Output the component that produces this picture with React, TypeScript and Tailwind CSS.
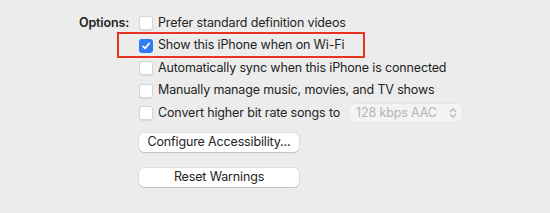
const font = { fontFamily: '"Inter", "Liberation Sans", sans-serif' };

function Checkbox({ checked = false }: { checked?: boolean }) {
  if (checked) {
    return (
      <span className="flex h-[14px] w-[14px] shrink-0 items-center justify-center rounded-[3px] bg-[#2f7cf6]">
        <svg width="10" height="10" viewBox="0 0 10 10" fill="none">
          <path d="M2 5.3 L4.1 7.4 L8.2 2.4" stroke="white" strokeWidth="1.7" strokeLinecap="round" strokeLinejoin="round" />
        </svg>
      </span>
    );
  }
  return (
    <span className="h-[14px] w-[14px] shrink-0 rounded-[3px] border border-[#d6d6d6] bg-white shadow-[0_0.5px_1px_rgba(0,0,0,0.08)]" />
  );
}

function Row({ checked, label, children }: { checked?: boolean; label: string; children?: React.ReactNode }) {
  return (
    <div className="flex h-[22.5px] items-center">
      <Checkbox checked={checked} />
      <span className="ml-[5px] whitespace-nowrap">{label}</span>
      {children}
    </div>
  );
}

function Button({ label }: { label: string }) {
  return (
    <button className="flex h-[19px] w-[160px] items-center justify-center rounded-[5px] bg-white text-[#242424] shadow-[0_0_0_0.5px_rgba(0,0,0,0.12),0_1px_1px_rgba(0,0,0,0.12)]">
      {label}
    </button>
  );
}

export default function App() {
  return (
    <div className="h-[213px] w-full bg-[#ececec] text-[12.5px] tracking-[-0.15px] text-[#242424]" style={font}>
      <div className="flex pt-[12px]">
        <div className="w-[130px] shrink-0 pr-[1px] text-right">
          <div className="flex h-[22.5px] items-center justify-end font-semibold">Options:</div>
        </div>
        <div className="ml-[9px] flex flex-col">
          <Row label="Prefer standard definition videos" />
          <div className="relative">
            <Row checked label="Show this iPhone when on Wi-Fi" />
            {/* annotation box */}
            <div className="pointer-events-none absolute left-[-22px] top-[-2.5px] h-[26px] w-[248px] border-2 border-[#ea3323]" />
          </div>
          <Row label="Automatically sync when this iPhone is connected" />
          <Row label="Manually manage music, movies, and TV shows" />
          <Row label="Convert higher bit rate songs to">
            <div className="ml-[9px] flex h-[18px] w-[113px] items-center justify-between rounded-[5px] bg-[#f3f3f3] pl-[7px] pr-[5px] text-[#b5b5b5] shadow-[0_0_0_0.5px_rgba(0,0,0,0.06)]">
              <span>128 kbps AAC</span>
              <svg width="8" height="12" viewBox="0 0 8 12" fill="none">
                <path d="M1.5 4.5 L4 2 L6.5 4.5 M1.5 7.5 L4 10 L6.5 7.5" stroke="#b5b5b5" strokeWidth="1.3" strokeLinecap="round" strokeLinejoin="round" />
              </svg>
            </div>
          </Row>
          <div className="mt-[8px] flex flex-col gap-[16px]">
            <Button label="Configure Accessibility..." />
            <Button label="Reset Warnings" />
          </div>
        </div>
      </div>
    </div>
  );
}
